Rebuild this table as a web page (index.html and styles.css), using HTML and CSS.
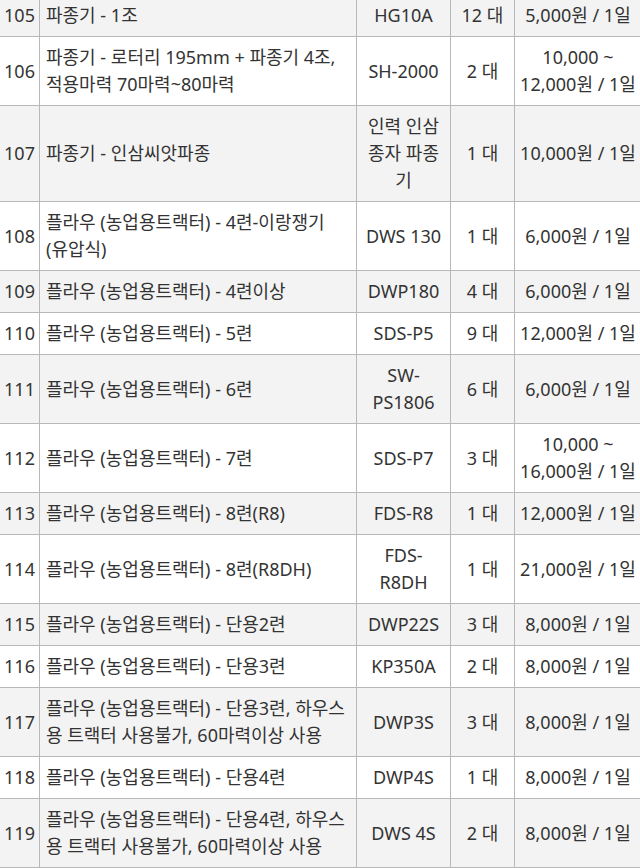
FILE: index.html
```html
<!DOCTYPE html>
<html lang="ko">
<head>
<meta charset="utf-8">
<link rel="stylesheet" href="styles.css">
</head>
<body>
<table class="rent">
  <colgroup>
    <col class="c-no"><col class="c-name"><col class="c-model"><col class="c-qty"><col class="c-price">
  </colgroup>
  <tbody>
    <tr><td class="no">105</td><td class="name">파종기 - 1조</td><td class="model">HG10A</td><td class="qty">12 대</td><td class="price">5,000원 / 1일</td></tr>
    <tr><td class="no">106</td><td class="name">파종기 - 로터리 195mm + 파종기 4조, 적용마력 70마력~80마력</td><td class="model">SH-2000</td><td class="qty">2 대</td><td class="price">10,000 ~ 12,000원 / 1일</td></tr>
    <tr><td class="no">107</td><td class="name">파종기 - 인삼씨앗파종</td><td class="model">인력 인삼 종자 파종기</td><td class="qty">1 대</td><td class="price">10,000원 / 1일</td></tr>
    <tr><td class="no">108</td><td class="name">플라우 (농업용트랙터) - 4련-이랑쟁기 (유압식)</td><td class="model">DWS 130</td><td class="qty">1 대</td><td class="price">6,000원 / 1일</td></tr>
    <tr><td class="no">109</td><td class="name">플라우 (농업용트랙터) - 4련이상</td><td class="model">DWP180</td><td class="qty">4 대</td><td class="price">6,000원 / 1일</td></tr>
    <tr><td class="no">110</td><td class="name">플라우 (농업용트랙터) - 5련</td><td class="model">SDS-P5</td><td class="qty">9 대</td><td class="price">12,000원 / 1일</td></tr>
    <tr><td class="no">111</td><td class="name">플라우 (농업용트랙터) - 6련</td><td class="model">SW-PS1806</td><td class="qty">6 대</td><td class="price">6,000원 / 1일</td></tr>
    <tr><td class="no">112</td><td class="name">플라우 (농업용트랙터) - 7련</td><td class="model">SDS-P7</td><td class="qty">3 대</td><td class="price">10,000 ~ 16,000원 / 1일</td></tr>
    <tr><td class="no">113</td><td class="name">플라우 (농업용트랙터) - 8련(R8)</td><td class="model">FDS-R8</td><td class="qty">1 대</td><td class="price">12,000원 / 1일</td></tr>
    <tr><td class="no">114</td><td class="name">플라우 (농업용트랙터) - 8련(R8DH)</td><td class="model">FDS-R8DH</td><td class="qty">1 대</td><td class="price">21,000원 / 1일</td></tr>
    <tr><td class="no">115</td><td class="name">플라우 (농업용트랙터) - 단용2련</td><td class="model">DWP22S</td><td class="qty">3 대</td><td class="price">8,000원 / 1일</td></tr>
    <tr><td class="no">116</td><td class="name">플라우 (농업용트랙터) - 단용3련</td><td class="model">KP350A</td><td class="qty">2 대</td><td class="price">8,000원 / 1일</td></tr>
    <tr><td class="no">117</td><td class="name">플라우 (농업용트랙터) - 단용3련, 하우스용 트랙터 사용불가, 60마력이상 사용</td><td class="model">DWP3S</td><td class="qty">3 대</td><td class="price">8,000원 / 1일</td></tr>
    <tr><td class="no">118</td><td class="name">플라우 (농업용트랙터) - 단용4련</td><td class="model">DWP4S</td><td class="qty">1 대</td><td class="price">8,000원 / 1일</td></tr>
    <tr><td class="no">119</td><td class="name">플라우 (농업용트랙터) - 단용4련, 하우스용 트랙터 사용불가, 60마력이상 사용</td><td class="model">DWS 4S</td><td class="qty">2 대</td><td class="price">8,000원 / 1일</td></tr>
  </tbody>
</table>
</body>
</html>
```
FILE: styles.css
```css
html, body {
  margin: 0;
  padding: 0;
  background: #ffffff;
  overflow: hidden;
}
body {
  font-family: "Noto Sans", "Noto Sans CJK KR", sans-serif;
  font-size: 18px;
  color: #333333;
}
.rent {
  border-collapse: collapse;
  table-layout: fixed;
  width: 642px;
  margin: -6px 0 0 -1px;
}
.c-no { width: 40px; }
.c-name { width: 317px; }
.c-model { width: 94px; }
.c-qty { width: 64px; }
.c-price { width: 127px; }
.rent td {
  border: 1px solid #b8b8b8;
  padding: 7px 6px;
  line-height: 1.5;
  vertical-align: middle;
  text-align: center;
}
.rent tr:nth-child(odd) td {
  background: #f3f3f3;
}
.rent td.no {
  padding-left: 2px;
  padding-right: 2px;
}
.rent td.name {
  text-align: left;
}
.rent td.price {
  padding-left: 4px;
  padding-right: 4px;
}
```
